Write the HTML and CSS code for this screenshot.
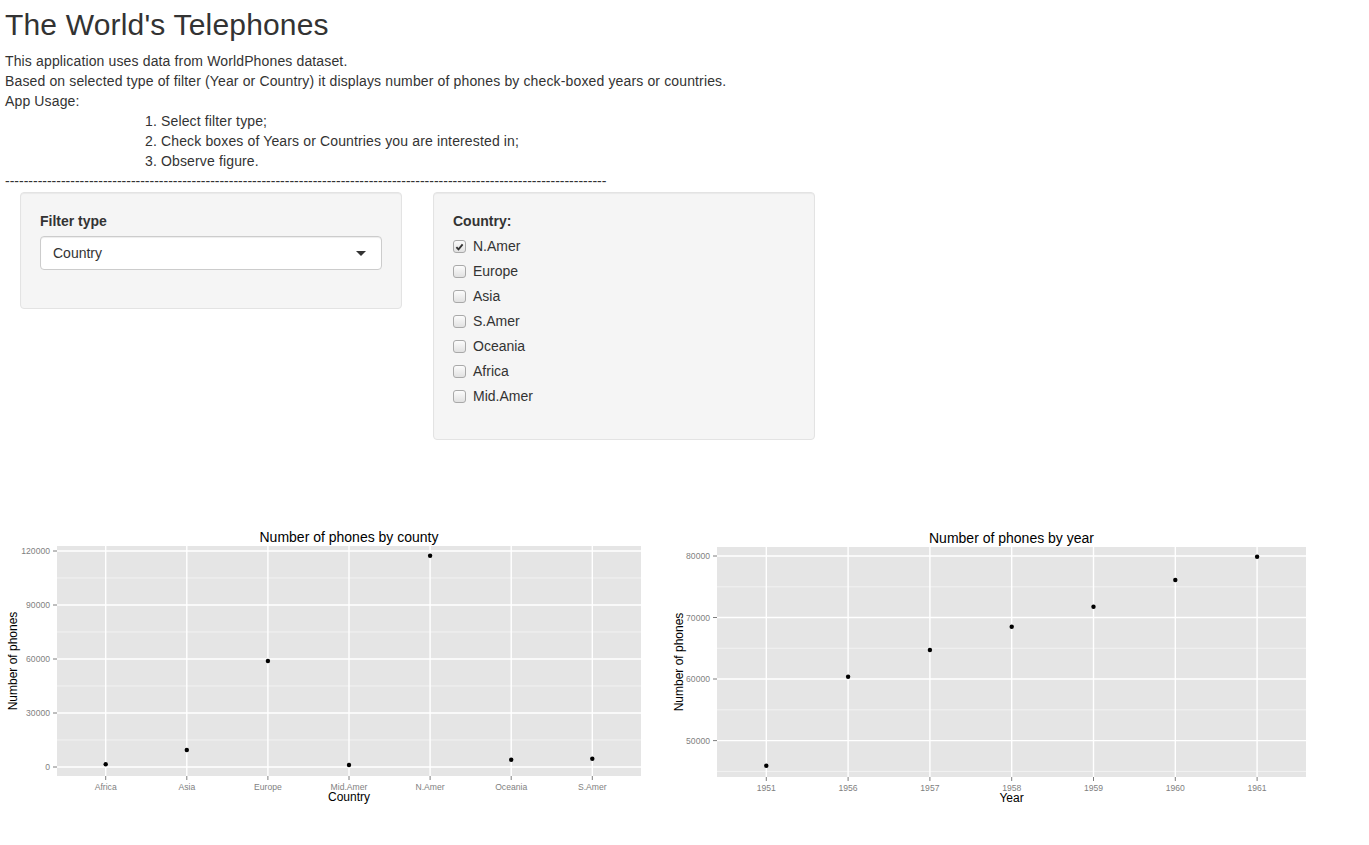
FILE: index.html
```html
<!DOCTYPE html>
<html lang="en">
<head>
<meta charset="utf-8">
<title>The World's Telephones</title>
<link rel="stylesheet" href="styles.css">
</head>
<body>
<div class="page">
  <h1 class="title">The World's Telephones</h1>
  <div class="intro">
    <p>This application uses data from WorldPhones dataset.</p>
    <p>Based on selected type of filter (Year or Country) it displays number of phones by check-boxed years or countries.</p>
    <p>App Usage:</p>
    <ol class="steps">
      <li>Select filter type;</li>
      <li>Check boxes of Years or Countries you are interested in;</li>
      <li>Observe figure.</li>
    </ol>
    <p class="rule">---------------------------------------------------------------------------------------------------------------------------------</p>
  </div>

  <div class="controls">
    <div class="well well-filter">
      <label class="ctl-label" for="filter">Filter type</label>
      <div class="select">
        <span class="select-value">Country</span>
        <span class="caret"></span>
      </div>
    </div>
    <div class="well well-country">
      <div class="ctl-label">Country:</div>
      <div class="options">
        <label class="check"><input type="checkbox" checked><span class="box"><svg width="12" height="12" viewBox="0 0 12 12"><path d="M2.6 6.2 L4.9 8.6 L9.4 3.2" fill="none" stroke="#333" stroke-width="2"/></svg></span><span>N.Amer</span></label>
        <label class="check"><input type="checkbox"><span class="box"></span><span>Europe</span></label>
        <label class="check"><input type="checkbox"><span class="box"></span><span>Asia</span></label>
        <label class="check"><input type="checkbox"><span class="box"></span><span>S.Amer</span></label>
        <label class="check"><input type="checkbox"><span class="box"></span><span>Oceania</span></label>
        <label class="check"><input type="checkbox"><span class="box"></span><span>Africa</span></label>
        <label class="check"><input type="checkbox"><span class="box"></span><span>Mid.Amer</span></label>
      </div>
    </div>
  </div>

  <div class="plots">
    <svg class="plot" width="660" height="300" viewBox="0 0 660 300">
      <text class="p-title" x="349" y="17">Number of phones by county</text>
      <rect x="57" y="26" width="584" height="230" fill="#e5e5e5"/>
      <g stroke="#f2f2f2" stroke-width="1">
        <line x1="57" x2="641" y1="220" y2="220"/>
        <line x1="57" x2="641" y1="166" y2="166"/>
        <line x1="57" x2="641" y1="112" y2="112"/>
        <line x1="57" x2="641" y1="58" y2="58"/>
      </g>
      <g stroke="#ffffff" stroke-width="1.4">
        <line x1="57" x2="641" y1="247" y2="247"/>
        <line x1="57" x2="641" y1="193" y2="193"/>
        <line x1="57" x2="641" y1="139" y2="139"/>
        <line x1="57" x2="641" y1="85" y2="85"/>
        <line x1="57" x2="641" y1="31" y2="31"/>
        <line y1="26" y2="256" x1="105.7" x2="105.7"/>
        <line y1="26" y2="256" x1="186.8" x2="186.8"/>
        <line y1="26" y2="256" x1="267.9" x2="267.9"/>
        <line y1="26" y2="256" x1="349" x2="349"/>
        <line y1="26" y2="256" x1="430.1" x2="430.1"/>
        <line y1="26" y2="256" x1="511.2" x2="511.2"/>
        <line y1="26" y2="256" x1="592.3" x2="592.3"/>
      </g>
      <g stroke="#7f7f7f" stroke-width="1">
        <line x1="53" x2="57" y1="247" y2="247"/>
        <line x1="53" x2="57" y1="193" y2="193"/>
        <line x1="53" x2="57" y1="139" y2="139"/>
        <line x1="53" x2="57" y1="85" y2="85"/>
        <line x1="53" x2="57" y1="31" y2="31"/>
        <line y1="256" y2="260" x1="105.7" x2="105.7"/>
        <line y1="256" y2="260" x1="186.8" x2="186.8"/>
        <line y1="256" y2="260" x1="267.9" x2="267.9"/>
        <line y1="256" y2="260" x1="349" x2="349"/>
        <line y1="256" y2="260" x1="430.1" x2="430.1"/>
        <line y1="256" y2="260" x1="511.2" x2="511.2"/>
        <line y1="256" y2="260" x1="592.3" x2="592.3"/>
      </g>
      <g class="ytick">
        <text x="50" y="247">0</text>
        <text x="50" y="193">30000</text>
        <text x="50" y="139">60000</text>
        <text x="50" y="85">90000</text>
        <text x="50" y="31">120000</text>
      </g>
      <g class="xtick">
        <text x="105.7" y="267">Africa</text>
        <text x="186.8" y="267">Asia</text>
        <text x="267.9" y="267">Europe</text>
        <text x="349" y="267">Mid.Amer</text>
        <text x="430.1" y="267">N.Amer</text>
        <text x="511.2" y="267">Oceania</text>
        <text x="592.3" y="267">S.Amer</text>
      </g>
      <g fill="#000">
        <circle cx="105.7" cy="244.3" r="2.2"/>
        <circle cx="186.8" cy="230" r="2.2"/>
        <circle cx="267.9" cy="141" r="2.2"/>
        <circle cx="349" cy="245" r="2.2"/>
        <circle cx="430.1" cy="35.7" r="2.2"/>
        <circle cx="511.2" cy="239.7" r="2.2"/>
        <circle cx="592.3" cy="238.7" r="2.2"/>
      </g>
      <text class="ax-title" x="349" y="277">Country</text>
      <text class="ax-title" transform="translate(13 141) rotate(-90)" x="0" y="0">Number of phones</text>
    </svg>

    <svg class="plot" width="660" height="300" viewBox="0 0 660 300">
      <text class="p-title" x="351.5" y="18">Number of phones by year</text>
      <rect x="57" y="27" width="589" height="230" fill="#e5e5e5"/>
      <g stroke="#f2f2f2" stroke-width="1">
        <line x1="57" x2="646" y1="251.4" y2="251.4"/>
        <line x1="57" x2="646" y1="189.8" y2="189.8"/>
        <line x1="57" x2="646" y1="128.3" y2="128.3"/>
        <line x1="57" x2="646" y1="66.8" y2="66.8"/>
      </g>
      <g stroke="#ffffff" stroke-width="1.4">
        <line x1="57" x2="646" y1="220.6" y2="220.6"/>
        <line x1="57" x2="646" y1="159" y2="159"/>
        <line x1="57" x2="646" y1="97.5" y2="97.5"/>
        <line x1="57" x2="646" y1="36" y2="36"/>
        <line y1="27" y2="257" x1="106.3" x2="106.3"/>
        <line y1="27" y2="257" x1="188.1" x2="188.1"/>
        <line y1="27" y2="257" x1="269.9" x2="269.9"/>
        <line y1="27" y2="257" x1="351.7" x2="351.7"/>
        <line y1="27" y2="257" x1="433.5" x2="433.5"/>
        <line y1="27" y2="257" x1="515.3" x2="515.3"/>
        <line y1="27" y2="257" x1="597.1" x2="597.1"/>
      </g>
      <g stroke="#7f7f7f" stroke-width="1">
        <line x1="53" x2="57" y1="220.6" y2="220.6"/>
        <line x1="53" x2="57" y1="159" y2="159"/>
        <line x1="53" x2="57" y1="97.5" y2="97.5"/>
        <line x1="53" x2="57" y1="36" y2="36"/>
        <line y1="257" y2="261" x1="106.3" x2="106.3"/>
        <line y1="257" y2="261" x1="188.1" x2="188.1"/>
        <line y1="257" y2="261" x1="269.9" x2="269.9"/>
        <line y1="257" y2="261" x1="351.7" x2="351.7"/>
        <line y1="257" y2="261" x1="433.5" x2="433.5"/>
        <line y1="257" y2="261" x1="515.3" x2="515.3"/>
        <line y1="257" y2="261" x1="597.1" x2="597.1"/>
      </g>
      <g class="ytick">
        <text x="50" y="220.6">50000</text>
        <text x="50" y="159">60000</text>
        <text x="50" y="97.5">70000</text>
        <text x="50" y="36">80000</text>
      </g>
      <g class="xtick">
        <text x="106.3" y="268">1951</text>
        <text x="188.1" y="268">1956</text>
        <text x="269.9" y="268">1957</text>
        <text x="351.7" y="268">1958</text>
        <text x="433.5" y="268">1959</text>
        <text x="515.3" y="268">1960</text>
        <text x="597.1" y="268">1961</text>
      </g>
      <g fill="#000">
        <circle cx="106.3" cy="245.7" r="2.2"/>
        <circle cx="188.1" cy="156.7" r="2.2"/>
        <circle cx="269.9" cy="130" r="2.2"/>
        <circle cx="351.7" cy="106.7" r="2.2"/>
        <circle cx="433.5" cy="86.7" r="2.2"/>
        <circle cx="515.3" cy="60" r="2.2"/>
        <circle cx="597.1" cy="36.7" r="2.2"/>
      </g>
      <text class="ax-title" x="351.5" y="278">Year</text>
      <text class="ax-title" transform="translate(19 142) rotate(-90)" x="0" y="0">Number of phones</text>
    </svg>
  </div>
</div>
</body>
</html>
```

FILE: styles.css
```css
html, body {
  margin: 0;
  background: #ffffff;
}

body {
  font-family: "Liberation Sans", Arial, Helvetica, sans-serif;
  font-size: 14px;
  line-height: 20px;
  color: #333333;
}

.page {
  padding: 8px 0 0 5px;
}

.title {
  margin: 0 0 10px 0;
  font-size: 30px;
  line-height: 33px;
  font-weight: 400;
  color: #333333;
  letter-spacing: 0.18px;
}

.intro p,
.intro li {
  margin: 0;
  letter-spacing: 0.14px;
}

.steps {
  margin: 0;
  padding-left: 156px;
}

.intro .rule {
  white-space: nowrap;
  overflow: hidden;
  letter-spacing: 0;
}

.controls {
  display: flex;
  align-items: flex-start;
  gap: 31px;
  margin: 1px 0 0 15px;
}

.well {
  box-sizing: border-box;
  width: 382px;
  background: #f5f5f5;
  border: 1px solid #e3e3e3;
  border-radius: 4px;
  box-shadow: inset 0 1px 1px rgba(0, 0, 0, 0.05);
  padding: 18px 19px 19px 19px;
}

.ctl-label {
  display: block;
  font-weight: 700;
  margin-bottom: 5px;
}

.select {
  box-sizing: border-box;
  height: 34px;
  margin-bottom: 19px;
  background: #ffffff;
  border: 1px solid #cccccc;
  border-radius: 4px;
  box-shadow: inset 0 1px 1px rgba(0, 0, 0, 0.075);
  padding: 6px 12px;
  display: flex;
  align-items: center;
  justify-content: space-between;
}

.caret {
  width: 0;
  height: 0;
  border-left: 5px solid transparent;
  border-right: 5px solid transparent;
  border-top: 5px solid #333333;
  margin-right: 3px;
  margin-top: 1px;
}

.options {
  display: flex;
  flex-direction: column;
  gap: 5px;
  margin-bottom: 14px;
}

.check {
  display: flex;
  align-items: center;
  height: 20px;
  font-weight: 400;
}

.check input {
  position: absolute;
  opacity: 0;
  width: 0;
  height: 0;
  margin: 0;
}

.box {
  box-sizing: border-box;
  width: 13px;
  height: 13px;
  border: 1px solid #a9a9a9;
  border-radius: 3px;
  background: linear-gradient(#fcfcfc, #e1e1e1);
  margin: 1px 7px 0 0;
  display: flex;
  align-items: center;
  justify-content: center;
}

.box svg {
  display: block;
}

.plots {
  display: flex;
  margin: 80px 0 0 -5px;
}

.plot {
  display: block;
  flex: none;
  font-family: "Liberation Sans", Arial, Helvetica, sans-serif;
}

.p-title {
  font-size: 14px;
  fill: #000000;
  text-anchor: middle;
  dominant-baseline: central;
}

.ax-title {
  font-size: 12px;
  fill: #000000;
  text-anchor: middle;
  dominant-baseline: central;
}

.ytick text {
  font-size: 8.6px;
  fill: #7f7f7f;
  text-anchor: end;
  dominant-baseline: central;
}

.xtick text {
  font-size: 8.6px;
  fill: #7f7f7f;
  text-anchor: middle;
  dominant-baseline: central;
}
```
